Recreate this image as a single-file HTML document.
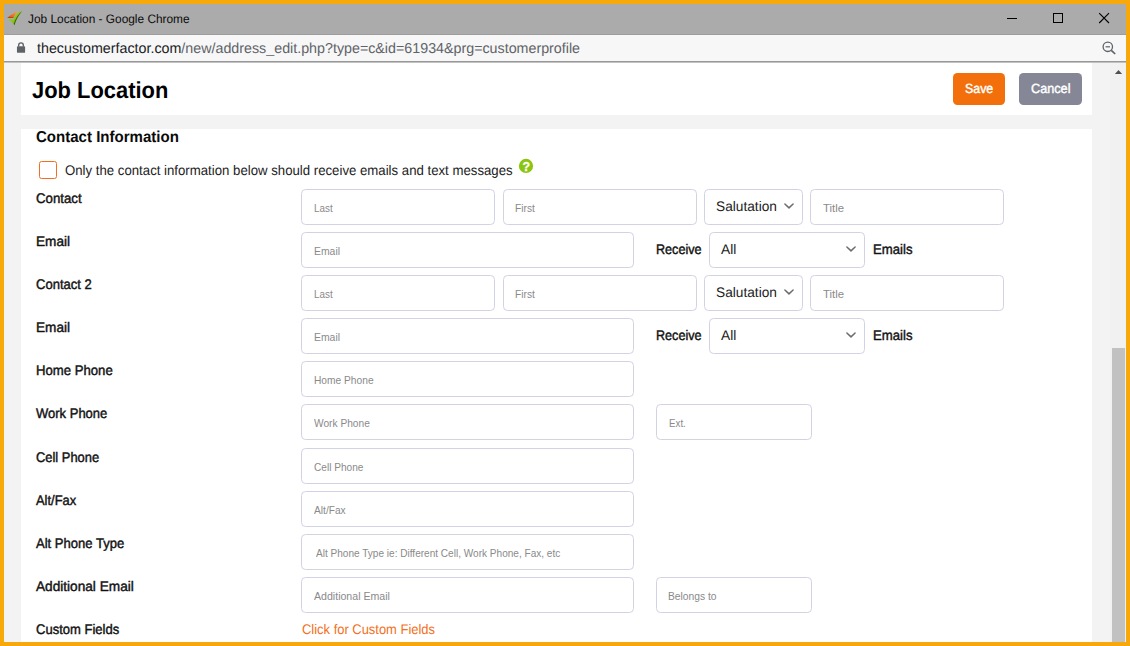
<!DOCTYPE html>
<html lang="en">
<head>
<meta charset="utf-8">
<title>Job Location</title>
<style>
html,body{margin:0;padding:0}
body{width:1130px;height:646px;position:relative;overflow:hidden;background:#f7a80b;font-family:"Liberation Sans",sans-serif}
.a,.t,.inp,.blk{position:absolute}
.t{white-space:nowrap;line-height:20px;transform-origin:0 50%;display:block}
#win{position:absolute;left:4px;top:4px;width:1122px;height:638px;background:#f3f3f3;overflow:hidden}
#titlebar{position:absolute;left:4px;top:4px;width:1122px;height:31px;background:#ababab;box-sizing:border-box;border-bottom:1px solid #9c9c9c}
#addr{position:absolute;left:4px;top:35px;width:1122px;height:26px;background:#f7f7f7}
#sep{position:absolute;left:4px;top:61px;width:1122px;height:1px;background:#979797}
#sep2{position:absolute;left:4px;top:62px;width:1122px;height:1px;background:#c2c2c2}
#hdr{left:21px;top:63px;width:1071px;height:51.9px;background:#fff}
#sec{left:21px;top:128.6px;width:1071px;height:513.4px;background:#fff}
#track{left:1110.2px;top:63px;width:15.8px;height:579px;background:#f1f1f1}
#thumb{left:1112px;top:347.8px;width:13px;height:294.2px;background:#c1c1c1}
.inp{box-sizing:border-box;border:1px solid #d1d3e2;border-radius:4.5px;background:#fff}
.btn{position:absolute;top:72.9px;height:31.9px;border-radius:4.5px}
#cb{left:39.1px;top:161.1px;width:17.7px;height:17.6px;box-sizing:border-box;border:1.3px solid #f0701f;border-radius:2.5px;background:#fff}
</style>
</head>
<body>
<div id="win"></div>
<div id="titlebar"></div>
<div id="addr"></div>
<div id="sep"></div><div id="sep2"></div>
<div id="hdr" class="blk"></div>
<div id="sec" class="blk"></div>
<div id="track" class="blk"></div>
<div id="thumb" class="blk"></div>

<!-- favicon -->
<svg class="a" style="left:4px;top:6px" width="30" height="26" viewBox="0 0 30 26">
  <defs>
    <linearGradient id="og" x1="0" y1="1" x2="1" y2="0"><stop offset="0" stop-color="#d9480a"/><stop offset="1" stop-color="#ffb23a"/></linearGradient>
    <linearGradient id="gg" x1="0" y1="0" x2="1" y2="1"><stop offset="0" stop-color="#a8e51c"/><stop offset="1" stop-color="#6aa80c"/></linearGradient>
  </defs>
  <path d="M3.3 11.7 C7.4 8.6 10.6 6.2 14.2 4.9 L12.4 7.4 C11.0 8.9 10.0 10.4 9.5 11.7 Z" fill="url(#og)"/>
  <path d="M3.3 11.7 L9.3 11.7 L9.6 11.0 L4.6 11.0 Z" fill="#9c3303" opacity=".8"/>
  <path d="M4.0 13.2 C6.2 12.9 8.2 13.2 9.4 13.9 C10.6 10.2 13.4 6.2 18.3 4.8 C15.0 8.4 12.2 13.4 10.4 19.2 C9.0 16.8 6.6 14.6 4.0 13.2 Z" fill="url(#gg)"/>
  <path d="M18.2 4.9 C15.0 8.4 12.2 13.4 10.4 19.2 L9.7 18.0 C11.3 12.6 14.2 8.0 18.2 4.9 Z" fill="#1c3a03" opacity=".7"/>
</svg>

<!-- window controls -->
<svg class="a" style="left:1000px;top:8px" width="120" height="22" viewBox="0 0 120 22">
  <path d="M7 10.5 H17" stroke="#000" stroke-width="1" fill="none"/>
  <rect x="53.5" y="5.5" width="9" height="9" stroke="#000" stroke-width="1" fill="none"/>
  <path d="M99.2 5.2 L109 15 M109 5.2 L99.2 15" stroke="#000" stroke-width="1.1" fill="none"/>
</svg>

<!-- lock -->
<svg class="a" style="left:15px;top:40px" width="12" height="14" viewBox="0 0 12 14">
  <path d="M3.65 6.4 V5.2 a2.35 2.35 0 0 1 4.7 0 V6.4" fill="none" stroke="#5f6368" stroke-width="1.35"/>
  <rect x="1.95" y="6.15" width="8.15" height="6.7" rx="0.9" fill="#5f6368"/>
</svg>

<!-- zoom icon -->
<svg class="a" style="left:1099px;top:38px" width="20" height="20" viewBox="0 0 20 20">
  <circle cx="8.8" cy="8.8" r="4.7" fill="none" stroke="#5f6368" stroke-width="1.3"/>
  <path d="M12.3 12.3 L16.2 16.0" stroke="#5f6368" stroke-width="1.7" stroke-linecap="butt"/>
  <path d="M6.6 8.8 H11" stroke="#5f6368" stroke-width="1.2"/>
</svg>

<!-- scrollbar arrow -->
<svg class="a" style="left:1112px;top:66px" width="13" height="12" viewBox="0 0 13 12">
  <path d="M6.5 3.9 L10.1 7.9 H2.9 Z" fill="#505050"/>
</svg>

<!-- buttons -->
<div class="btn" style="left:952.9px;width:52px;background:#f36f0b"></div>
<div class="btn" style="left:1018.9px;width:63px;background:#858796"></div>

<!-- checkbox + help icon -->
<div id="cb" class="blk"></div>
<svg class="a" style="left:518px;top:158px" width="16" height="16" viewBox="0 0 16 16">
  <circle cx="8" cy="7.9" r="7.1" fill="#8cc50f"/>
  <text x="8.3" y="12.9" text-anchor="middle" font-family="Liberation Sans, sans-serif" font-weight="700" font-size="12.4" fill="#fff" stroke="#fff" stroke-width="0.3">?</text>
</svg>

<div class="inp" style="left:301.1px;top:189px;width:193.5px;height:36px"></div>
<div class="inp" style="left:503.1px;top:189px;width:193.5px;height:36px"></div>
<div class="inp" style="left:704.2px;top:189px;width:98.4px;height:36px"></div>
<div class="inp" style="left:810.2px;top:189px;width:193.5px;height:36px"></div>
<div class="inp" style="left:301.1px;top:275px;width:193.5px;height:36px"></div>
<div class="inp" style="left:503.1px;top:275px;width:193.5px;height:36px"></div>
<div class="inp" style="left:704.2px;top:275px;width:98.4px;height:36px"></div>
<div class="inp" style="left:810.2px;top:275px;width:193.5px;height:36px"></div>
<div class="inp" style="left:301.1px;top:232px;width:332.6px;height:36px"></div>
<div class="inp" style="left:709.3px;top:232px;width:155.5px;height:36px"></div>
<div class="inp" style="left:301.1px;top:318px;width:332.6px;height:36px"></div>
<div class="inp" style="left:709.3px;top:318px;width:155.5px;height:36px"></div>
<div class="inp" style="left:301.1px;top:361px;width:332.6px;height:36px"></div>
<div class="inp" style="left:301.1px;top:404px;width:332.6px;height:36px"></div>
<div class="inp" style="left:656.2px;top:404px;width:155.5px;height:36px"></div>
<div class="inp" style="left:301.1px;top:448px;width:332.6px;height:36px"></div>
<div class="inp" style="left:301.1px;top:491px;width:332.6px;height:36px"></div>
<div class="inp" style="left:301.1px;top:534px;width:332.6px;height:36px"></div>
<div class="inp" style="left:301.1px;top:577px;width:332.6px;height:36px"></div>
<div class="inp" style="left:656.2px;top:577px;width:155.5px;height:36px"></div>
<svg class="a" style="left:782.8px;top:202.3px" width="12" height="8" viewBox="0 0 12 8"><path d="M1.9 2.0 L6 5.9 L10.1 2.0" fill="none" stroke="#6b6b6b" stroke-width="1.45" stroke-linecap="round" stroke-linejoin="round"/></svg>
<svg class="a" style="left:782.8px;top:288.3px" width="12" height="8" viewBox="0 0 12 8"><path d="M1.9 2.0 L6 5.9 L10.1 2.0" fill="none" stroke="#6b6b6b" stroke-width="1.45" stroke-linecap="round" stroke-linejoin="round"/></svg>
<svg class="a" style="left:844.5px;top:245.2px" width="12" height="8" viewBox="0 0 12 8"><path d="M1.9 2.0 L6 5.9 L10.1 2.0" fill="none" stroke="#6b6b6b" stroke-width="1.45" stroke-linecap="round" stroke-linejoin="round"/></svg>
<svg class="a" style="left:844.5px;top:331.2px" width="12" height="8" viewBox="0 0 12 8"><path d="M1.9 2.0 L6 5.9 L10.1 2.0" fill="none" stroke="#6b6b6b" stroke-width="1.45" stroke-linecap="round" stroke-linejoin="round"/></svg>
<span id="t0" class="t" style="left:28px;top:9.02px;font-size:12.3px;font-weight:400;color:#0a0a0a;transform:scale(0.9650,1);transform-origin:0 13.98px;text-rendering:geometricPrecision;">Job Location - Google Chrome</span>
<span id="t1" class="t" style="left:37px;top:39.02px;font-size:14.4px;font-weight:400;color:#202124;transform:scale(0.9917,1);transform-origin:0 13.98px;text-rendering:geometricPrecision;">thecustomerfactor.com<span style="color:#5f6368">/new/address_edit.php?type=c&amp;id=61934&amp;prg=customerprofile</span></span>
<span id="t2" class="t" style="left:32px;top:80.02px;font-size:23.2px;font-weight:700;color:#000;transform:scale(0.9447,1);transform-origin:0 17.98px;text-rendering:geometricPrecision;">Job Location</span>
<span id="t3" class="t" style="left:965px;top:79.02px;font-size:13.4px;font-weight:400;color:#fff;transform:scale(0.9239,1);transform-origin:0 13.98px;text-rendering:geometricPrecision;-webkit-text-stroke:0.42px #fff;">Save</span>
<span id="t4" class="t" style="left:1031px;top:79.02px;font-size:13.4px;font-weight:400;color:#fff;transform:scale(0.9466,1);transform-origin:0 13.98px;text-rendering:geometricPrecision;-webkit-text-stroke:0.42px #fff;">Cancel</span>
<span id="t5" class="t" style="left:36px;top:128.02px;font-size:15.8px;font-weight:700;color:#0a0a0a;transform:scale(0.9518,1);transform-origin:0 13.98px;text-rendering:geometricPrecision;">Contact Information</span>
<span id="t6" class="t" style="left:65px;top:160.04px;font-size:13.9px;font-weight:400;color:#222;transform:scale(0.9504,1);transform-origin:0 14.96px;text-rendering:geometricPrecision;">Only the contact information below should receive emails and text messages</span>
<span id="t7" class="t" style="left:36px;top:188.03px;font-size:13.9px;font-weight:400;color:#111;transform:scale(0.9539,1);transform-origin:0 14.97px;text-rendering:geometricPrecision;-webkit-text-stroke:0.42px #111;">Contact</span>
<span id="t8" class="t" style="left:36px;top:231.03px;font-size:13.9px;font-weight:400;color:#111;transform:scale(0.9782,1);transform-origin:0 14.97px;text-rendering:geometricPrecision;-webkit-text-stroke:0.42px #111;">Email</span>
<span id="t9" class="t" style="left:36px;top:274.03px;font-size:13.9px;font-weight:400;color:#111;transform:scale(0.9377,1);transform-origin:0 14.97px;text-rendering:geometricPrecision;-webkit-text-stroke:0.42px #111;">Contact 2</span>
<span id="t10" class="t" style="left:36px;top:317.03px;font-size:13.9px;font-weight:400;color:#111;transform:scale(0.9782,1);transform-origin:0 14.97px;text-rendering:geometricPrecision;-webkit-text-stroke:0.42px #111;">Email</span>
<span id="t11" class="t" style="left:36px;top:360.03px;font-size:13.9px;font-weight:400;color:#111;transform:scale(0.9458,1);transform-origin:0 14.97px;text-rendering:geometricPrecision;-webkit-text-stroke:0.42px #111;">Home Phone</span>
<span id="t12" class="t" style="left:36px;top:403.03px;font-size:13.9px;font-weight:400;color:#111;transform:scale(0.9359,1);transform-origin:0 14.97px;text-rendering:geometricPrecision;-webkit-text-stroke:0.42px #111;">Work Phone</span>
<span id="t13" class="t" style="left:36px;top:447.03px;font-size:13.9px;font-weight:400;color:#111;transform:scale(0.9294,1);transform-origin:0 14.97px;text-rendering:geometricPrecision;-webkit-text-stroke:0.42px #111;">Cell Phone</span>
<span id="t14" class="t" style="left:36px;top:490.03px;font-size:13.9px;font-weight:400;color:#111;transform:scale(0.9295,1);transform-origin:0 14.97px;text-rendering:geometricPrecision;-webkit-text-stroke:0.42px #111;">Alt/Fax</span>
<span id="t15" class="t" style="left:36px;top:533.03px;font-size:13.9px;font-weight:400;color:#111;transform:scale(0.9393,1);transform-origin:0 14.97px;text-rendering:geometricPrecision;-webkit-text-stroke:0.42px #111;">Alt Phone Type</span>
<span id="t16" class="t" style="left:36px;top:576.03px;font-size:13.9px;font-weight:400;color:#111;transform:scale(0.9816,1);transform-origin:0 14.97px;text-rendering:geometricPrecision;-webkit-text-stroke:0.42px #111;">Additional Email</span>
<span id="t17" class="t" style="left:36px;top:619.03px;font-size:13.9px;font-weight:400;color:#111;transform:scale(0.9365,1);transform-origin:0 14.97px;text-rendering:geometricPrecision;-webkit-text-stroke:0.42px #111;">Custom Fields</span>
<span id="t18" class="t" style="left:314px;top:198.02px;font-size:11.4px;font-weight:400;color:#8a8a8a;transform:scale(0.8693,1);transform-origin:0 13.98px;">Last</span>
<span id="t19" class="t" style="left:515px;top:198.02px;font-size:11.4px;font-weight:400;color:#8a8a8a;transform:scale(0.8952,1);transform-origin:0 13.98px;">First</span>
<span id="t20" class="t" style="left:823px;top:198.02px;font-size:11.4px;font-weight:400;color:#8a8a8a;transform:scale(0.9948,1);transform-origin:0 13.98px;">Title</span>
<span id="t21" class="t" style="left:314px;top:241.02px;font-size:11.4px;font-weight:400;color:#8a8a8a;transform:scale(0.9134,1);transform-origin:0 13.98px;">Email</span>
<span id="t22" class="t" style="left:314px;top:284.02px;font-size:11.4px;font-weight:400;color:#8a8a8a;transform:scale(0.8693,1);transform-origin:0 13.98px;">Last</span>
<span id="t23" class="t" style="left:515px;top:284.02px;font-size:11.4px;font-weight:400;color:#8a8a8a;transform:scale(0.8952,1);transform-origin:0 13.98px;">First</span>
<span id="t24" class="t" style="left:823px;top:284.02px;font-size:11.4px;font-weight:400;color:#8a8a8a;transform:scale(0.9948,1);transform-origin:0 13.98px;">Title</span>
<span id="t25" class="t" style="left:314px;top:327.02px;font-size:11.4px;font-weight:400;color:#8a8a8a;transform:scale(0.9134,1);transform-origin:0 13.98px;">Email</span>
<span id="t26" class="t" style="left:314px;top:370.02px;font-size:11.4px;font-weight:400;color:#8a8a8a;transform:scale(0.8960,1);transform-origin:0 13.98px;">Home Phone</span>
<span id="t27" class="t" style="left:314px;top:413.02px;font-size:11.4px;font-weight:400;color:#8a8a8a;transform:scale(0.8940,1);transform-origin:0 13.98px;">Work Phone</span>
<span id="t28" class="t" style="left:669px;top:413.02px;font-size:11.4px;font-weight:400;color:#8a8a8a;transform:scale(0.8573,1);transform-origin:0 13.98px;">Ext.</span>
<span id="t29" class="t" style="left:314px;top:457.02px;font-size:11.4px;font-weight:400;color:#8a8a8a;transform:scale(0.8875,1);transform-origin:0 13.98px;">Cell Phone</span>
<span id="t30" class="t" style="left:314px;top:500.02px;font-size:11.4px;font-weight:400;color:#8a8a8a;transform:scale(0.8935,1);transform-origin:0 13.98px;">Alt/Fax</span>
<span id="t31" class="t" style="left:316px;top:543.02px;font-size:11.4px;font-weight:400;color:#8a8a8a;transform:scale(0.8829,1);transform-origin:0 13.98px;">Alt Phone Type ie: Different Cell, Work Phone, Fax, etc</span>
<span id="t32" class="t" style="left:314px;top:586.02px;font-size:11.4px;font-weight:400;color:#8a8a8a;transform:scale(0.9295,1);transform-origin:0 13.98px;">Additional Email</span>
<span id="t33" class="t" style="left:668px;top:586.02px;font-size:11.4px;font-weight:400;color:#8a8a8a;transform:scale(0.9021,1);transform-origin:0 13.98px;">Belongs to</span>
<span id="t34" class="t" style="left:716px;top:196.03px;font-size:13.9px;font-weight:400;color:#222;transform:scale(0.9859,1);transform-origin:0 14.97px;text-rendering:geometricPrecision;">Salutation</span>
<span id="t35" class="t" style="left:716px;top:282.03px;font-size:13.9px;font-weight:400;color:#222;transform:scale(0.9859,1);transform-origin:0 14.97px;text-rendering:geometricPrecision;">Salutation</span>
<span id="t36" class="t" style="left:656px;top:239.03px;font-size:13.9px;font-weight:400;color:#111;transform:scale(0.9071,1);transform-origin:0 14.97px;text-rendering:geometricPrecision;-webkit-text-stroke:0.42px #111;">Receive</span>
<span id="t37" class="t" style="left:721px;top:239.03px;font-size:13.9px;font-weight:400;color:#222;transform:scale(0.9931,1);transform-origin:0 14.97px;text-rendering:geometricPrecision;">All</span>
<span id="t38" class="t" style="left:873px;top:239.03px;font-size:13.9px;font-weight:400;color:#111;transform:scale(0.9474,1);transform-origin:0 14.97px;text-rendering:geometricPrecision;-webkit-text-stroke:0.42px #111;">Emails</span>
<span id="t39" class="t" style="left:656px;top:325.03px;font-size:13.9px;font-weight:400;color:#111;transform:scale(0.9071,1);transform-origin:0 14.97px;text-rendering:geometricPrecision;-webkit-text-stroke:0.42px #111;">Receive</span>
<span id="t40" class="t" style="left:721px;top:325.03px;font-size:13.9px;font-weight:400;color:#222;transform:scale(0.9931,1);transform-origin:0 14.97px;text-rendering:geometricPrecision;">All</span>
<span id="t41" class="t" style="left:873px;top:325.03px;font-size:13.9px;font-weight:400;color:#111;transform:scale(0.9474,1);transform-origin:0 14.97px;text-rendering:geometricPrecision;-webkit-text-stroke:0.42px #111;">Emails</span>
<span id="t42" class="t" style="left:302px;top:619.03px;font-size:13.9px;font-weight:400;color:#f26f21;transform:scale(0.9315,1);transform-origin:0 14.97px;text-rendering:geometricPrecision;">Click for Custom Fields</span>
</body>
</html>
